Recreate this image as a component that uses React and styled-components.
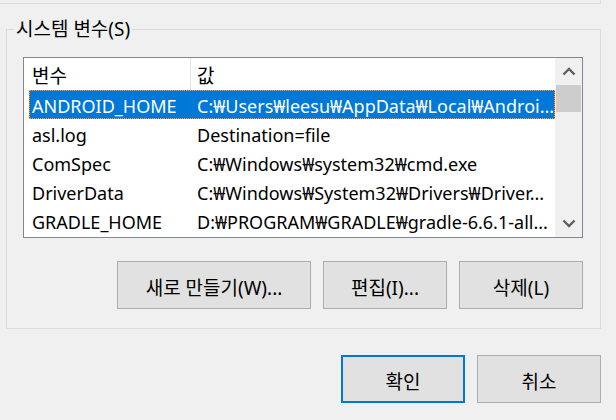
import React from "react"
import styled, { createGlobalStyle } from "styled-components"

const GlobalStyle = createGlobalStyle`
  body {
    margin: 0;
    background: #f0f0f0;
    font-family: "Noto Sans", "Noto Sans CJK KR", sans-serif;
    font-size: 18px;
    color: #000;
  }
`

const Page = styled.div`
  width: 616px;
  height: 420px;
  overflow: hidden;
`

const PrevGroupEdge = styled.div`
  width: 600px;
  height: 3px;
  border-bottom: 1px solid #dcdcdc;
  border-right: 1px solid #dcdcdc;
`

const GroupBox = styled.section`
  position: relative;
  box-sizing: border-box;
  width: 595px;
  margin: 25px 0 0 6px;
  padding: 27px 17px 19px 16px;
  border: 1px solid #dcdcdc;
`

const Legend = styled.span`
  position: absolute;
  top: -13px;
  left: 7px;
  padding: 0 2px;
  background: #f0f0f0;
  font-size: 19px;
  line-height: 24px;
`

const ListView = styled.div`
  display: flex;
  height: 181px;
  box-sizing: border-box;
  border: 1px solid #828790;
  background: #fff;
`

const ListBody = styled.div`
  flex: 1;
  min-width: 0;
`

const HeaderRow = styled.div`
  display: flex;
  height: 32px;
  align-items: center;
`

const HeaderCell = styled.div`
  box-sizing: border-box;
  width: ${p => p.width || "auto"};
  flex: ${p => (p.width ? "none" : 1)};
  height: 100%;
  display: flex;
  align-items: center;
  padding: 2px 0 0 ${p => p.pad}px;
  font-size: 19px;
  border-right: ${p => (p.divider ? "1px solid #e5e5e5" : "none")};
`

const Rows = styled.div`
  padding-left: 5px;
`

const Row = styled.div`
  display: flex;
  height: 29px;
  align-items: center;
  box-sizing: border-box;
  padding-top: 2px;
  background: ${p => (p.selected ? "#0078d7" : "transparent")};
  color: ${p => (p.selected ? "#fff" : "#000")};
  outline: ${p => (p.selected ? "1px dotted #f7a14a" : "none")};
  outline-offset: -1px;
`

const Cell = styled.div`
  box-sizing: border-box;
  width: ${p => p.width || "auto"};
  flex: ${p => (p.width ? "none" : 1)};
  padding-left: ${p => p.pad}px;
  white-space: nowrap;
  overflow: hidden;
`

const ScrollBar = styled.div`
  width: 27px;
  display: flex;
  flex-direction: column;
  background: #f0f0f0;
`

const ArrowButton = styled.div`
  height: 27px;
  display: flex;
  align-items: center;
  justify-content: center;
`

const Thumb = styled.div`
  height: 27px;
  margin: 0 1px;
  background: #cdcdcd;
`

const Track = styled.div`
  flex: 1;
`

const ButtonRow = styled.div`
  display: flex;
  justify-content: flex-end;
  gap: 12px;
  margin-top: ${p => p.top}px;
  padding-right: ${p => p.right || 0}px;
`

const Button = styled.button`
  box-sizing: border-box;
  width: ${p => p.width}px;
  height: 48px;
  padding: 4px 0 0;
  font: inherit;
  font-size: 19px;
  color: #000;
  background: #e1e1e1;
  border: ${p => (p.primary ? "2px solid #0078d7" : "1px solid #adadad")};
`

const Chevron = ({ down }) => (
  <svg width="14" height="9" viewBox="0 0 14 9">
    <path
      d={down ? "M1.5 1.5 L7 7 L12.5 1.5" : "M1.5 7.5 L7 2 L12.5 7.5"}
      fill="none"
      stroke="#606060"
      strokeWidth="2.4"
    />
  </svg>
)

const vars = [
  ["ANDROID_HOME", "C:₩Users₩leesu₩AppData₩Local₩Androi..."],
  ["asl.log", "Destination=file"],
  ["ComSpec", "C:₩Windows₩system32₩cmd.exe"],
  ["DriverData", "C:₩Windows₩System32₩Drivers₩Driver..."],
  ["GRADLE_HOME", "D:₩PROGRAM₩GRADLE₩gradle-6.6.1-all..."],
]

export default function App() {
  return (
    <Page>
      <GlobalStyle />
      <PrevGroupEdge />
      <GroupBox>
        <Legend>시스템 변수(S)</Legend>
        <ListView>
          <ListBody>
            <HeaderRow>
              <HeaderCell width="167px" pad={8} divider>
                변수
              </HeaderCell>
              <HeaderCell pad={6}>값</HeaderCell>
            </HeaderRow>
            <Rows>
              {vars.map(([name, value], i) => (
                <Row key={name} selected={i === 0}>
                  <Cell width="162px" pad={3}>
                    {name}
                  </Cell>
                  <Cell pad={6}>{value}</Cell>
                </Row>
              ))}
            </Rows>
          </ListBody>
          <ScrollBar>
            <ArrowButton>
              <Chevron />
            </ArrowButton>
            <Thumb />
            <Track />
            <ArrowButton>
              <Chevron down />
            </ArrowButton>
          </ScrollBar>
        </ListView>
        <ButtonRow top={23}>
          <Button width={194}>새로 만들기(W)...</Button>
          <Button width={124}>편집(I)...</Button>
          <Button width={124}>삭제(L)</Button>
        </ButtonRow>
      </GroupBox>
      <ButtonRow top={26} right={15}>
        <Button width={124} primary>
          확인
        </Button>
        <Button width={124}>취소</Button>
      </ButtonRow>
    </Page>
  )
}
